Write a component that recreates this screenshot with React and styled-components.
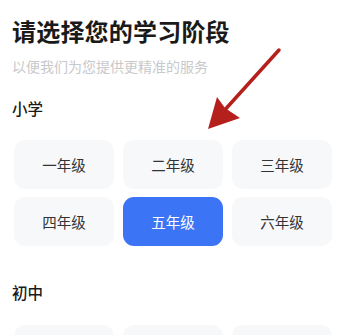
import React from "react";
import styled, { createGlobalStyle } from "styled-components";

const Global = createGlobalStyle`
  html, body {
    margin: 0;
    padding: 0;
    background: #fff;
  }
  body {
    font-family: "Noto Sans CJK SC", "Noto Sans", sans-serif;
  }
`;

const Page = styled.div`
  position: relative;
  width: 362px;
  height: 335px;
  overflow: hidden;
  background: #fff;
  padding: 16px 0 0 12px;
  box-sizing: border-box;
`;

const Title = styled.h1`
  margin: 0;
  font-size: 24px;
  line-height: 30px;
  font-weight: 700;
  color: #1a1a1a;
  letter-spacing: 0.2px;
`;

const Subtitle = styled.p`
  margin: 11px 0 0 0;
  font-size: 14px;
  line-height: 18px;
  color: #c8c9cc;
`;

const SectionLabel = styled.div`
  margin-top: ${(p) => p.$top}px;
  font-size: 15.5px;
  line-height: 20px;
  font-weight: 500;
  color: #1a1a1a;
`;

const Grid = styled.div`
  display: grid;
  grid-template-columns: repeat(3, 100px);
  grid-auto-rows: 49px;
  column-gap: 9px;
  row-gap: 8px;
  margin: ${(p) => p.$top}px 0 0 2px;
`;

const Grade = styled.div`
  display: flex;
  align-items: center;
  justify-content: center;
  border-radius: 11px;
  font-size: 14.5px;
  color: ${(p) => (p.$active ? "#fff" : "#333")};
  background: ${(p) => (p.$active ? "#3c74f6" : "#f7f8fa")};
`;

const Arrow = styled.svg`
  position: absolute;
  left: 0;
  top: 0;
  pointer-events: none;
`;

const primary = ["一年级", "二年级", "三年级", "四年级", "五年级", "六年级"];
const middle = ["junior-1", "junior-2", "junior-3"];

export default function App() {
  return (
    <>
      <Global />
      <Page>
        <Title>请选择您的学习阶段</Title>
        <Subtitle>以便我们为您提供更精准的服务</Subtitle>
        <SectionLabel $top={23}>小学</SectionLabel>
        <Grid $top={22}>
          {primary.map((g) => (
            <Grade key={g} $active={g === "五年级"}>
              {g}
            </Grade>
          ))}
        </Grid>
        <SectionLabel $top={36}>初中</SectionLabel>
        <Grid $top={23}>
          {middle.map((g) => (
            <Grade key={g} />
          ))}
        </Grid>
        <Arrow width="362" height="335" viewBox="0 0 362 335">
          <line x1="279" y1="50" x2="222" y2="113" stroke="#b5201c" strokeWidth="3.5" strokeLinecap="round" />
          <polygon points="208,129 217,97 225,108 240,118" fill="#b5201c" />
        </Arrow>
      </Page>
    </>
  );
}
